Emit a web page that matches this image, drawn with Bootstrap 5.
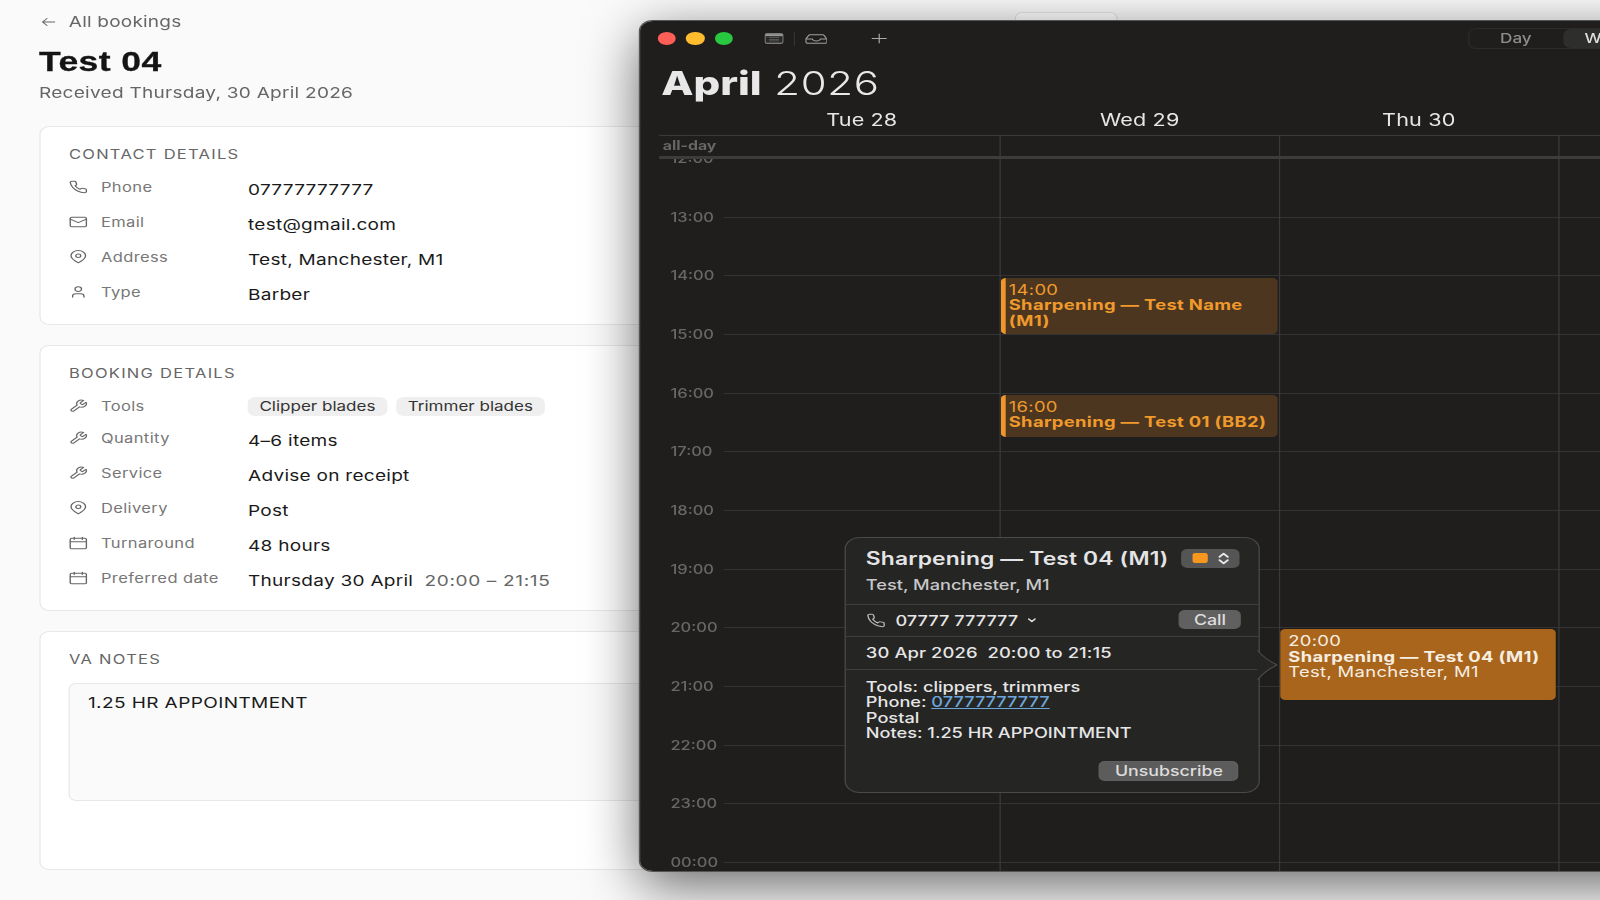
<!DOCTYPE html>
<html lang="en">
<head>
  <meta charset="UTF-8" />
  <meta name="viewport" content="width=device-width, initial-scale=1.0" />
  <title>Test 04 - Booking</title>
  <link href="https://cdn.jsdelivr.net/npm/bootstrap@5.3.0/dist/css/bootstrap.min.css" rel="stylesheet">
  <style>
    html, body { height: 100%; overflow: hidden; }
    body { background: #fafafa; font-family: Inter, "Liberation Sans", sans-serif; color: #1a1a1a; }

    /* the whole capture is stretched wider than it is tall */
    .stage { width: 1260px; height: 900px; position: relative; transform: scaleX(1.27); transform-origin: 0 0; }

    /* booking page */
    .page-col { width: 880px; padding: 11px 0 0 30.7px; }
    .top-row { height: 34px; }
    .back-link { font-size: 15px; line-height: 22px; letter-spacing: .15px; color: #666; text-decoration: none; }
    .back-link svg { width: 12px; height: 12px; margin: 0 10px 0 1.5px; }
    .spare-btn { width: 81px; height: 30px; margin-top: 1px; background: #fff; border: 1px solid #e5e5e5; border-radius: 6px; }
    .page-title { font-family: "Liberation Sans", sans-serif; font-size: 28px; line-height: 34px; font-weight: 700; letter-spacing: .3px; color: #141414; margin: 0; -webkit-text-stroke: .3px #141414; }
    .received { font-size: 15px; line-height: 20px; letter-spacing: .2px; color: #666; margin: 4px 0 23px; }
    .info-card { --bs-card-border-color: #e8e8e8; --bs-card-border-radius: 8px; padding: 19px 22.6px 6px; margin-bottom: 20px; background: #fff; }
    .card-head { font-size: 13px; line-height: 16px; letter-spacing: 1px; font-weight: 400; color: #666; text-transform: uppercase; margin: 0 0 16px; }
    .info-row { height: 35px; }
    .info-row.is-short { height: 32px; }
    .info-label { width: 141px; font-size: 13px; line-height: 18px; letter-spacing: .3px; color: #777; flex: none; }
    .info-label svg { width: 15.3px; height: 14px; margin-right: 9.900px; vertical-align: -2px; fill: none; stroke: #666; stroke-width: 1.7; stroke-linecap: round; stroke-linejoin: round; }
    .info-value { font-size: 15px; line-height: 22px; letter-spacing: .2px; padding-top: 1px; }
    .time-range { color: #666; margin-left: 4.5px; letter-spacing: .5px; }
    .tool-chip { font-size: 13.4px; line-height: 19px; padding: 0 9px; background: #efefef; border-radius: 6px; color: #333; }
    .tool-chip + .tool-chip { margin-left: 7.5px; }
    .notes-box { height: 118px; padding: 8px 14px; font-size: 15px; line-height: 22px; letter-spacing: .3px; background: #fafafa; border-color: #e8e8e8; color: #1a1a1a; resize: none; }
    .notes-card { padding-bottom: 68px; margin-top: 20px; }

    /* calendar window */
    .cal-window { position: absolute; left: 503.6px; top: 20.5px; width: 1200px; height: 850px; background: #1f1e1d; border-radius: 10px; overflow: hidden; }
    .cal-shadow { position: absolute; left: 503.6px; top: 20.5px; width: 1200px; height: 850px; border-radius: 10px; box-shadow: 0 0 0 1px #555, 0 14px 48px rgba(0,0,0,.6); }
    .title-bar { height: 36.4px; padding-left: 14.2px; }
    .light { width: 14.2px; height: 12.5px; border-radius: 50%; margin-right: 8.5px; }
    .light-red { background: #ff5f57; }
    .light-amber { background: #febc2e; }
    .light-green { background: #28c840; }
    .tb-cal { width: 15px; height: 13px; margin-left: 16.4px; }
    .tb-sep { width: 1px; height: 14px; background: #333; margin: 0 7.6px 0 8px; }
    .tb-inbox { width: 17.6px; height: 12px; }
    .tb-plus { width: 12.6px; height: 13px; margin-left: 34.6px; }
    .view-seg { height: 21px; margin-left: 457px; border: 1px solid #2b2b2a; border-radius: 6px; font-size: 13.5px; font-weight: 500; color: #8c8c8c; }
    .view-seg span { padding: 0 17px; line-height: 19px; }
    .view-seg .seg-day { width: 74px; text-align: center; padding: 0; }
    .view-seg .seg-on { background: #2e2e2d; color: #ddd; border-radius: 6px; width: 100px; }
    .month-title { margin: 7.5px 0 0 17px; font-size: 33px; line-height: 38px; color: #e8e8e8; font-weight: 300; letter-spacing: .6px; }
    .month-title b { font-weight: 800; letter-spacing: 0; }
    .day-heads { display: grid; grid-template-columns: 66px 218px 219.7px 219.7px 220px; margin-top: 5.5px; padding-bottom: 3px; font-size: 17px; line-height: 24px; letter-spacing: .1px; color: #e6e6e6; text-align: center; }
    .allday-row { display: grid; grid-template-columns: 50.3px 217.6px 219.7px 219.7px 220px; margin-left: 15.7px; height: 24px; border-top: 1px solid #3a3a3a; border-bottom: 3px solid #3c3c3c; }
    .allday-row > div:nth-child(n+3) { border-left: 1px solid #3a3a3a; }
    .allday-text { font-size: 12.5px; font-weight: 700; color: #666; line-height: 20px; padding-left: 2.5px; }
    .hour-grid { position: relative; height: 712px; overflow: hidden; }
    .hour-row { display: flex; height: 58.65px; }
    .hour-row:first-child { margin-top: -.7px; }
    .hour-label { width: 66px; flex: none; padding-left: 24.3px; margin-top: -8px; font-size: 13px; line-height: 16px; font-weight: 500; color: #676767; }
    .hour-line { flex-grow: 1; border-top: 1px solid #333; }
    .day-cols { position: absolute; inset: 0 0 0 66px; display: grid; grid-template-columns: 217.6px 219.7px 219.7px 220px; }
    .day-col { position: relative; border-left: 1px solid #3a3a3a; }
    .day-col:first-child { border-left: 0; }

    .cal-event { position: absolute; width: 218.4px; border-radius: 4px; font-size: 14.5px; line-height: 15.5px; letter-spacing: .25px; padding: 4px 4px 0 2.6px; }
    .cal-event b { font-weight: 700; }
    .ev-soft { left: -.5px; background: #4c3620; color: #f09a2c; border-left: 4px solid #f0962a; }
    .ev-1400 { top: 118.8px; height: 56.3px; }
    .ev-1600 { top: 236.1px; height: 42.3px; }
    .ev-2000 { left: -.3px; top: 469.8px; width: 217.8px; height: 71.7px; background: #a9651c; color: #f7eee2; padding: 4.5px 4px 0 6.8px; }

    .cal-pop { position: absolute; left: 161.2px; top: 516.2px; width: 327.2px; height: 256.6px; background: #252524; border: 1px solid #4a4a4a; border-radius: 12px; font-size: 14.3px; color: #e6e6e6; font-weight: 500; }
    .pop-arrow { position: absolute; right: -15.5px; top: 112px; width: 16px; height: 30px; }
    .pop-sec { border-bottom: 1px solid #3f3f3e; padding-left: 16px; }
    .pop-head { height: 67px; padding-top: 9px; padding-right: 15px; }
    .pop-title { font-size: 18px; line-height: 24px; font-weight: 600; letter-spacing: .1px; color: #e4e4e4; }
    .pop-addr { font-size: 14.3px; line-height: 18px; color: #c8c8c8; margin-top: 5px; }
    .colour-pick { width: 45.7px; height: 19.3px; margin-top: 2px; padding: 0 7.500px 0 9px; background: #555; border-radius: 5px; }
    .colour-pick i { width: 12px; height: 10px; background: #f7971e; border-radius: 2px; }
    .colour-pick svg { width: 9px; height: 13px; }
    .pop-phone { height: 32px; padding-right: 13.5px; }
    .phone-no { margin-top: 1.5px; }
    .pop-phone .ph-icon { width: 15.5px; height: 15px; margin-right: 7.8px; fill: none; stroke: #bbb; stroke-width: 1.6; }
    .pop-phone .ph-chev { width: 7px; height: 5px; margin-left: 7px; }
    .pop-btn { --bs-btn-bg: #606060; --bs-btn-color: #ddd; --bs-btn-border-color: #606060; --bs-btn-padding-y: 0; --bs-btn-padding-x: 0; --bs-btn-font-size: 14px; --bs-btn-font-weight: 500; --bs-btn-line-height: 18px; --bs-btn-border-radius: 5px; height: 19.5px; }
    .btn-call { width: 49.4px; margin-top: -1px; }
    .btn-unsub { width: 110.2px; background: #5c5c5c; }
    .pop-date { height: 33px; line-height: 31px; font-size: 14.5px; letter-spacing: .05px; }
    .pop-notes { padding: 9.2px 0 0 16px; line-height: 15.5px; height: 91.5px; }
    .pop-notes a { color: #6ea6dc; }
    .pop-foot { padding-right: 15.5px; }
  </style>
</head>
<body>
  <svg width="0" height="0" class="d-none">
    <symbol id="ic-phone" viewBox="0 0 24 24" preserveAspectRatio="none"><path d="M22 16.92v3a2 2 0 0 1-2.18 2 19.79 19.79 0 0 1-8.63-3.07 19.5 19.5 0 0 1-6-6 19.79 19.79 0 0 1-3.07-8.67A2 2 0 0 1 4.11 2h3a2 2 0 0 1 2 1.72 12.84 12.84 0 0 0 .7 2.81 2 2 0 0 1-.45 2.11L8.09 9.91a16 16 0 0 0 6 6l1.27-1.27a2 2 0 0 1 2.11-.45 12.84 12.84 0 0 0 2.81.7A2 2 0 0 1 22 16.92z"/></symbol>
    <symbol id="ic-mail" viewBox="0 0 24 24" preserveAspectRatio="none"><rect x="2" y="4" width="20" height="16" rx="2"/><path d="m22 7-10 6L2 7"/></symbol>
    <symbol id="ic-pin" viewBox="0 0 24 24" preserveAspectRatio="none"><path d="M21 10c0 5.500-9 12-9 12s-9-6.500-9-12a9 9 0 0 1 18 0Z"/><circle cx="12" cy="10" r="3"/></symbol>
    <symbol id="ic-user" viewBox="0 0 24 24" preserveAspectRatio="none"><path d="M19 21v-2a4 4 0 0 0-4-4H9a4 4 0 0 0-4 4v2"/><circle cx="12" cy="7" r="4"/></symbol>
    <symbol id="ic-wrench" viewBox="0 0 24 24" preserveAspectRatio="none"><path d="M14.7 6.300a1 1 0 0 0 0 1.400l1.600 1.600a1 1 0 0 0 1.400 0l3.770-3.770a6 6 0 0 1-7.940 7.940l-6.910 6.910a2.120 2.120 0 0 1-3-3l6.910-6.910a6 6 0 0 1 7.940-7.940l-3.760 3.760z"/></symbol>
    <symbol id="ic-cal" viewBox="0 0 24 24" preserveAspectRatio="none"><rect x="2" y="4" width="20" height="18" rx="2"/><path d="M7 2v4M17 2v4M2 10h20"/></symbol>
  </svg>

  <div class="stage">
    <main class="page-col">
      <div class="top-row d-flex justify-content-between align-items-start">
        <a href="#" class="back-link d-flex align-items-center">
          <svg viewBox="0 0 24 24" fill="none" stroke="#666" stroke-width="2" stroke-linecap="round" stroke-linejoin="round"><path d="M22 12H3M10 5l-7 7 7 7"/></svg>All bookings
        </a>
        <button type="button" class="spare-btn" aria-label="Actions"></button>
      </div>
      <h1 class="page-title">Test 04</h1>
      <p class="received">Received Thursday, 30 April 2026</p>

      <section class="card info-card">
        <h2 class="card-head">Contact details</h2>
        <div class="info-row d-flex"><div class="info-label"><svg><use href="#ic-phone"/></svg>Phone</div><div class="info-value">07777777777</div></div>
        <div class="info-row d-flex"><div class="info-label"><svg><use href="#ic-mail"/></svg>Email</div><div class="info-value">test@gmail.com</div></div>
        <div class="info-row d-flex"><div class="info-label"><svg><use href="#ic-pin"/></svg>Address</div><div class="info-value">Test, Manchester, M1</div></div>
        <div class="info-row d-flex"><div class="info-label"><svg><use href="#ic-user"/></svg>Type</div><div class="info-value">Barber</div></div>
      </section>

      <section class="card info-card">
        <h2 class="card-head">Booking details</h2>
        <div class="info-row is-short d-flex align-items-start"><div class="info-label"><svg><use href="#ic-wrench"/></svg>Tools</div><div class="d-flex"><span class="tool-chip">Clipper blades</span><span class="tool-chip">Trimmer blades</span></div></div>
        <div class="info-row d-flex"><div class="info-label"><svg><use href="#ic-wrench"/></svg>Quantity</div><div class="info-value">4–6 items</div></div>
        <div class="info-row d-flex"><div class="info-label"><svg><use href="#ic-wrench"/></svg>Service</div><div class="info-value">Advise on receipt</div></div>
        <div class="info-row d-flex"><div class="info-label"><svg><use href="#ic-pin"/></svg>Delivery</div><div class="info-value">Post</div></div>
        <div class="info-row d-flex"><div class="info-label"><svg><use href="#ic-cal"/></svg>Turnaround</div><div class="info-value">48 hours</div></div>
        <div class="info-row d-flex"><div class="info-label"><svg><use href="#ic-cal"/></svg>Preferred date</div><div class="info-value">Thursday 30 April <span class="time-range">20:00 – 21:15</span></div></div>
      </section>

      <section class="card info-card notes-card">
        <h2 class="card-head">VA notes</h2>
        <textarea class="form-control notes-box" readonly>1.25 HR APPOINTMENT</textarea>
      </section>
    </main>

    <div class="cal-shadow"></div>
    <div class="cal-window">
      <div class="title-bar d-flex align-items-center">
        <span class="light light-red"></span><span class="light light-amber"></span><span class="light light-green"></span>
        <svg class="tb-cal" viewBox="0 0 19 13"><rect x=".5" y=".5" width="18" height="12" rx="2" fill="#2a2a29" stroke="#9a9a9a"/><rect x="1" y="1" width="17" height="2.500" fill="#9a9a9a"/><path d="M5 5.500h9M5 7.500h9M5 9.500h9" stroke="#9a9a9a" stroke-width="1" stroke-dasharray="1 1"/></svg>
        <span class="tb-sep"></span>
        <svg class="tb-inbox" viewBox="0 0 22 12" fill="none" stroke="#a0a0a0" stroke-width="1.200"><path d="M5 .7h12a2 2 0 0 1 1.700 1L21.300 6v3.500a1.800 1.800 0 0 1-1.800 1.800h-17A1.800 1.800 0 0 1 .7 9.500V6L3.300 1.700A2 2 0 0 1 5 .7Z"/><path d="M.7 6H7c.5 2 2 2.500 4 2.500S14.500 8 15 6h6.300"/></svg>
        <svg class="tb-plus" viewBox="0 0 16 13" stroke="#a8a8a8" stroke-width="1.200"><path d="M8 .5v12M.5 6.500h15"/></svg>
        <div class="view-seg d-flex"><span class="seg-day">Day</span><span class="seg-on">Week</span></div>
      </div>
      <div class="month-title"><b>April</b> 2026</div>
      <div class="day-heads"><div></div><div>Tue 28</div><div>Wed 29</div><div>Thu 30</div><div></div></div>
      <div class="allday-row"><div class="allday-text">all-day</div><div></div><div></div><div></div><div></div></div>

      <div class="hour-grid">
        <div class="hour-row"><div class="hour-label">12:00</div><div class="hour-line"></div></div>
        <div class="hour-row"><div class="hour-label">13:00</div><div class="hour-line"></div></div>
        <div class="hour-row"><div class="hour-label">14:00</div><div class="hour-line"></div></div>
        <div class="hour-row"><div class="hour-label">15:00</div><div class="hour-line"></div></div>
        <div class="hour-row"><div class="hour-label">16:00</div><div class="hour-line"></div></div>
        <div class="hour-row"><div class="hour-label">17:00</div><div class="hour-line"></div></div>
        <div class="hour-row"><div class="hour-label">18:00</div><div class="hour-line"></div></div>
        <div class="hour-row"><div class="hour-label">19:00</div><div class="hour-line"></div></div>
        <div class="hour-row"><div class="hour-label">20:00</div><div class="hour-line"></div></div>
        <div class="hour-row"><div class="hour-label">21:00</div><div class="hour-line"></div></div>
        <div class="hour-row"><div class="hour-label">22:00</div><div class="hour-line"></div></div>
        <div class="hour-row"><div class="hour-label">23:00</div><div class="hour-line"></div></div>
        <div class="hour-row"><div class="hour-label">00:00</div><div class="hour-line"></div></div>

        <div class="day-cols">
          <div class="day-col"></div>
          <div class="day-col">
            <div class="cal-event ev-soft ev-1400">14:00<br><b>Sharpening — Test Name (M1)</b></div>
            <div class="cal-event ev-soft ev-1600">16:00<br><b>Sharpening — Test 01 (BB2)</b></div>
          </div>
          <div class="day-col">
            <div class="cal-event ev-2000">20:00<br><b>Sharpening — Test 04 (M1)</b><br>Test, Manchester, M1</div>
          </div>
          <div class="day-col"></div>
        </div>
      </div>

      <div class="cal-pop">
        <svg class="pop-arrow" viewBox="0 0 16 30"><path d="M0 0c3 5 9 11 15.500 15C9 19 3 25 0 30Z" fill="#252524"/><path d="M0 0c3 5 9 11 15.500 15C9 19 3 25 0 30" fill="none" stroke="#4a4a4a"/></svg>
        <div class="pop-sec pop-head">
          <div class="d-flex justify-content-between align-items-start">
            <div class="pop-title">Sharpening — Test 04 (M1)</div>
            <div class="colour-pick d-flex align-items-center justify-content-between">
              <i></i>
              <svg viewBox="0 0 8 12" fill="none" stroke="#e8e8e8" stroke-width="1.500" stroke-linecap="round" stroke-linejoin="round"><path d="M1 4.500 4 1.500l3 3M1 7.500l3 3 3-3"/></svg>
            </div>
          </div>
          <div class="pop-addr">Test, Manchester, M1</div>
        </div>
        <div class="pop-sec pop-phone d-flex align-items-center justify-content-between">
          <div class="phone-no d-flex align-items-center">
            <svg class="ph-icon"><use href="#ic-phone"/></svg>07777 777777
            <svg class="ph-chev" viewBox="0 0 7 5" fill="none" stroke="#ddd" stroke-width="1.300" stroke-linecap="round" stroke-linejoin="round"><path d="m1 1 2.500 2.500L6 1"/></svg>
          </div>
          <button type="button" class="btn pop-btn btn-call">Call</button>
        </div>
        <div class="pop-sec pop-date">30 Apr 2026&nbsp; 20:00 to 21:15</div>
        <div class="pop-notes">
          Tools: clippers, trimmers<br>
          Phone: <a href="#">07777777777</a><br>
          Postal<br>
          Notes: 1.25 HR APPOINTMENT
        </div>
        <div class="pop-foot d-flex justify-content-end">
          <button type="button" class="btn pop-btn btn-unsub">Unsubscribe</button>
        </div>
      </div>
    </div>
  </div>

  <script src="https://cdn.jsdelivr.net/npm/bootstrap@5.3.0/dist/js/bootstrap.bundle.min.js"></script>
</body>
</html>
